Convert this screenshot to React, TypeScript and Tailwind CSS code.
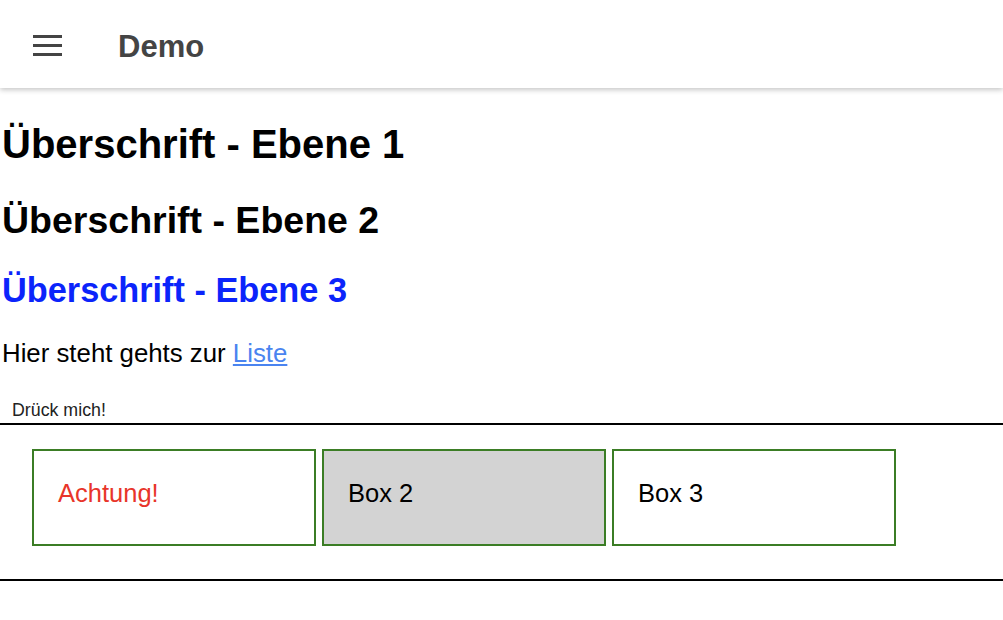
import React from "react";

const font = { fontFamily: '"Liberation Sans", Arial, sans-serif' };

const MenuIcon = () => (
  <svg width="30" height="22" viewBox="0 0 30 22" className="block">
    <rect x="0" y="1" width="29" height="3" fill="#444" />
    <rect x="0" y="10" width="29" height="3" fill="#444" />
    <rect x="0" y="19" width="29" height="3" fill="#444" />
  </svg>
);

const Box = ({ children, className = "" }: { children: React.ReactNode; className?: string }) => (
  <div
    className={`w-[284px] h-[97px] border-2 border-[#3b7d25] pl-6 pt-[27px] text-[25.5px] leading-[30px] ${className}`}
  >
    {children}
  </div>
);

export default function App() {
  return (
    <div className="min-h-[620px] bg-white text-black" style={font}>
      <header className="h-[88px] flex items-center shadow-[0_2px_5px_rgba(0,0,0,0.22)]">
        <div className="pl-[33px] pt-[1px]">
          <MenuIcon />
        </div>
        <span className="ml-[55px] pt-1 text-[31px] font-bold text-[#444] leading-none">Demo</span>
      </header>

      <main>
        <div className="px-[2px]">
          <h1 className="mt-8 text-[40px] leading-[48px] font-bold">Überschrift - Ebene 1</h1>
          <h2 className="mt-[30px] text-[37.5px] leading-[44px] font-bold">Überschrift - Ebene 2</h2>
          <h3 className="mt-7 text-[34.3px] leading-[40px] font-bold text-[#0b24fb]">Überschrift - Ebene 3</h3>
          <p className="mt-7 text-[25.8px] leading-[30px]">
            Hier steht gehts zur{" "}
            <a href="#" className="text-[#4a84f0] underline">
              Liste
            </a>
          </p>
        </div>
        <button className="mt-[32px] pl-3 text-[17.8px] leading-[20px] text-[#222]">Drück mich!</button>

        <section className="border-t-2 border-b-2 border-black pt-6 pb-[33px]">
          <div className="flex gap-[6px] px-8">
            <Box className="text-[#e8352a]">Achtung!</Box>
            <Box className="bg-[#d3d3d3]">Box 2</Box>
            <Box>Box 3</Box>
          </div>
        </section>
      </main>
    </div>
  );
}
